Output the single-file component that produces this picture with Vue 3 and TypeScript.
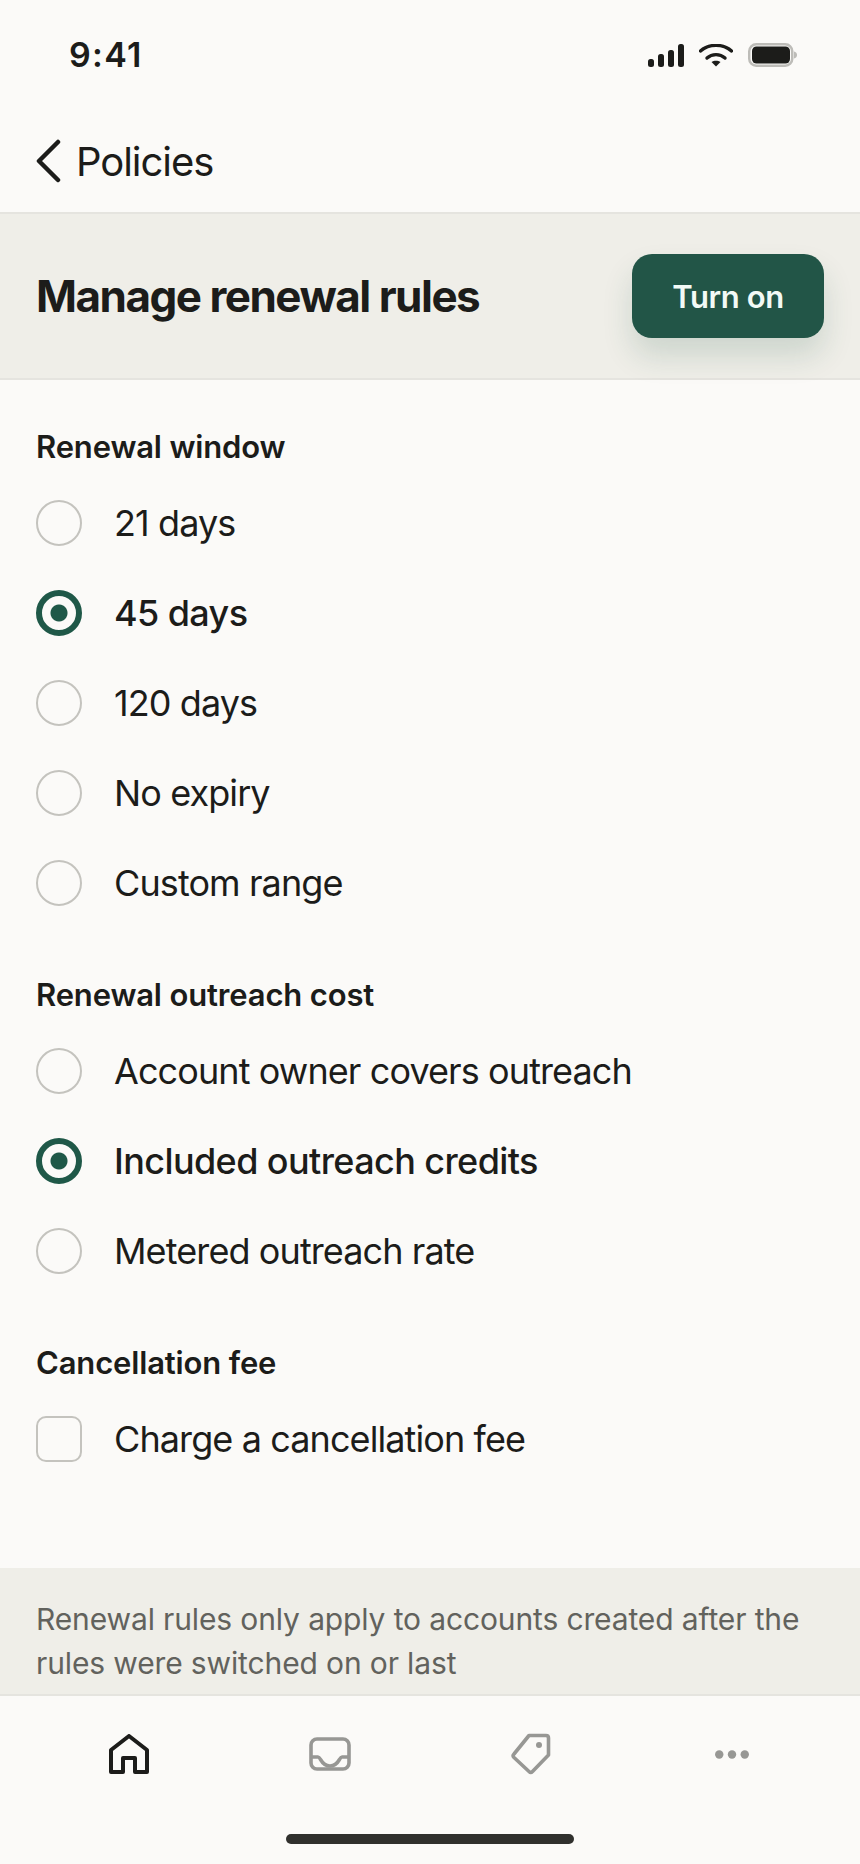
<script setup lang="ts">
interface Choice {
  label: string
  selected?: boolean
}

const renewalWindows: Choice[] = [
  { label: '21 days' },
  { label: '45 days', selected: true },
  { label: '120 days' },
  { label: 'No expiry' },
  { label: 'Custom range' },
]

const outreachCosts: Choice[] = [
  { label: 'Account owner covers outreach' },
  { label: 'Included outreach credits', selected: true },
  { label: 'Metered outreach rate' },
]
</script>

<template>
  <div class="screen">
    <div class="status">
      <span class="clock">9:41</span>
      <div class="status-icons">
        <svg class="signal" width="36" height="23" viewBox="0 0 36 23" fill="#1c1c1a">
          <rect x="0" y="15" width="6" height="8" rx="2.500" />
          <rect x="10" y="10" width="6" height="13" rx="2.500" />
          <rect x="20" y="6" width="6" height="17" rx="2.500" />
          <rect x="30" y="0" width="6" height="23" rx="2.500" />
        </svg>
        <svg class="wifi" width="34" height="23" viewBox="0 0 34 23" fill="none" stroke="#1c1c1a" stroke-width="3.400" stroke-linecap="round">
          <path d="M1.500 7C10 -0.500 24 -0.500 32.500 7" />
          <path d="M8 14C13 9.500 21 9.500 26 14" />
          <path d="M17 22.500L12.500 18C15 16.200 19 16.200 21.500 18Z" fill="#1c1c1a" stroke="none" />
        </svg>
        <svg width="51" height="24" viewBox="0 0 51 24">
          <rect x="1.250" y="1.250" width="43" height="21.500" rx="7" fill="none" stroke="#bdbcb8" stroke-width="2.500" />
          <rect x="4" y="3.500" width="38" height="17" rx="4.500" fill="#1c1c1a" />
          <path d="M46 8.500C50 9 50 15 46 15.500Z" fill="#bdbcb8" />
        </svg>
      </div>
    </div>

    <nav class="topbar">
      <svg width="26" height="44" viewBox="0 0 26 44" fill="none" stroke="#1c1c1a" stroke-width="4.500" stroke-linecap="round" stroke-linejoin="round">
        <path d="M22 3L3 22L22 41" />
      </svg>
      <span class="back-label">Policies</span>
    </nav>

    <header class="band">
      <h1 class="title">Manage renewal rules</h1>
      <button class="primary" type="button">Turn on</button>
    </header>

    <main class="content">
      <section class="group">
        <h2 class="group-title">Renewal window</h2>
        <label v-for="c in renewalWindows" :key="c.label" class="row">
          <span class="radio" :class="{ on: c.selected }"></span>
          <span class="row-text" :class="{ strong: c.selected }">{{ c.label }}</span>
        </label>
      </section>

      <section class="group">
        <h2 class="group-title">Renewal outreach cost</h2>
        <label v-for="c in outreachCosts" :key="c.label" class="row">
          <span class="radio" :class="{ on: c.selected }"></span>
          <span class="row-text" :class="{ strong: c.selected }">{{ c.label }}</span>
        </label>
      </section>

      <section class="group">
        <h2 class="group-title">Cancellation fee</h2>
        <label class="row">
          <span class="check"></span>
          <span class="row-text">Charge a cancellation fee</span>
        </label>
      </section>

      <p class="note">Renewal rules only apply to accounts created after the rules were switched on or last</p>
    </main>

    <footer class="tabs">
      <div class="tab-row">
        <svg width="40" height="40" viewBox="0 0 40 40" fill="none" stroke="#1c1c1a" stroke-width="4" stroke-linejoin="round">
          <path d="M20 2L38 16V38H26V24H14V38H2V16Z" />
        </svg>
        <svg width="42" height="34" viewBox="0 0 42 34" fill="none" stroke="#979794" stroke-width="3.600" stroke-linejoin="round">
          <rect x="2" y="2" width="38" height="30" rx="6" />
          <path d="M2 20H9C12 20 12 29 21 29C30 29 30 20 33 20H40" />
        </svg>
        <svg width="40" height="42" viewBox="0 0 40 42" fill="none" stroke="#979794" stroke-width="3.600" stroke-linejoin="round">
          <path d="M18 2.500H35C36.500 2.500 37.500 3.500 37.500 5V22L21.500 38.500C20.500 39.500 19 39.500 18 38.500L3 24.500C2 23.500 2 22 3 21Z" />
          <circle cx="28" cy="12" r="3" fill="#979794" stroke="none" />
        </svg>
        <svg width="34" height="9" viewBox="0 0 34 9" fill="#979794">
          <circle cx="4.250" cy="4.500" r="4.200" />
          <circle cx="17" cy="4.500" r="4.200" />
          <circle cx="29.750" cy="4.500" r="4.200" />
        </svg>
      </div>
      <div class="home-bar"></div>
    </footer>
  </div>
</template>

<style scoped>
.screen {
  width: 860px;
  height: 1864px;
  display: flex;
  flex-direction: column;
  overflow: hidden;
  background: #fbfaf8;
  color: #1c1c1a;
  font-family: Inter, "Liberation Sans", sans-serif;
}

.status {
  height: 110px;
  flex: none;
  box-sizing: border-box;
  display: flex;
  align-items: center;
  justify-content: space-between;
  padding: 0 61px 2px 69px;
}

.clock {
  font-size: 34px;
  font-weight: 600;
  letter-spacing: 1.3px;
}

.status-icons {
  display: flex;
  align-items: center;
  gap: 15px;
  padding-top: 2px;
}

.topbar {
  height: 104px;
  flex: none;
  box-sizing: border-box;
  border-bottom: 2px solid #e5e4df;
  display: flex;
  align-items: center;
  gap: 14px;
  padding: 0 0 0 36px;
}

.back-label {
  font-size: 40px;
  font-weight: 400;
  letter-spacing: -1.05px;
}

.band {
  height: 166px;
  flex: none;
  box-sizing: border-box;
  border-bottom: 2px solid #e5e4df;
  background: #efeee8;
  display: flex;
  align-items: center;
  justify-content: space-between;
  padding: 0 36px;
}

.title {
  margin: 0;
  font-size: 44px;
  font-weight: 700;
  letter-spacing: -1.5px;
}

.primary {
  width: 192px;
  height: 84px;
  border: 0;
  border-radius: 20px;
  background: #225547;
  color: #f2faf6;
  font-family: inherit;
  font-size: 31px;
  font-weight: 600;
  letter-spacing: -0.4px;
  box-shadow: 0 18px 30px rgba(34, 85, 71, 0.16);
}

.content {
  flex: 1;
  min-height: 0;
  overflow: hidden;
  display: flex;
  flex-direction: column;
  padding-top: 45px;
}

.group {
  padding: 0 36px;
  margin-bottom: 45px;
}

.group-title {
  margin: 0 0 9px;
  font-size: 31px;
  line-height: 44px;
  font-weight: 600;
  letter-spacing: -0.15px;
}

.row {
  height: 90px;
  display: flex;
  align-items: center;
  gap: 32px;
}

.row-text {
  font-size: 36px;
  letter-spacing: -0.9px;
}

.row-text.strong {
  font-weight: 500;
  letter-spacing: -0.6px;
}

.radio {
  width: 46px;
  height: 46px;
  box-sizing: border-box;
  border: 2.500px solid #c4c3be;
  border-radius: 50%;
  flex: none;
}

.radio.on {
  border: 6px solid #1f5848;
  background: radial-gradient(circle, #1f5848 0 8px, #fbfaf8 9px);
}

.check {
  width: 46px;
  height: 46px;
  box-sizing: border-box;
  border: 2.500px solid #c4c3be;
  border-radius: 10px;
  flex: none;
}

.note {
  margin: 39px 0 0;
  padding: 29px 36px 0;
  background: #efeee8;
  color: #62625d;
  font-size: 30px;
  line-height: 44px;
  letter-spacing: -0.13px;
  flex: 1;
}

.tabs {
  height: 170px;
  flex: none;
  box-sizing: border-box;
  border-top: 2px solid #e5e4df;
  position: relative;
}

.tab-row {
  height: 116px;
  display: grid;
  grid-template-columns: repeat(4, 1fr);
  padding: 0 28px;
  align-items: center;
  justify-items: center;
}

.home-bar {
  position: absolute;
  left: 286px;
  bottom: 20px;
  width: 288px;
  height: 10px;
  border-radius: 5px;
  background: #30302d;
}
</style>

<style>
body {
  background: #fbfaf8;
}
</style>
